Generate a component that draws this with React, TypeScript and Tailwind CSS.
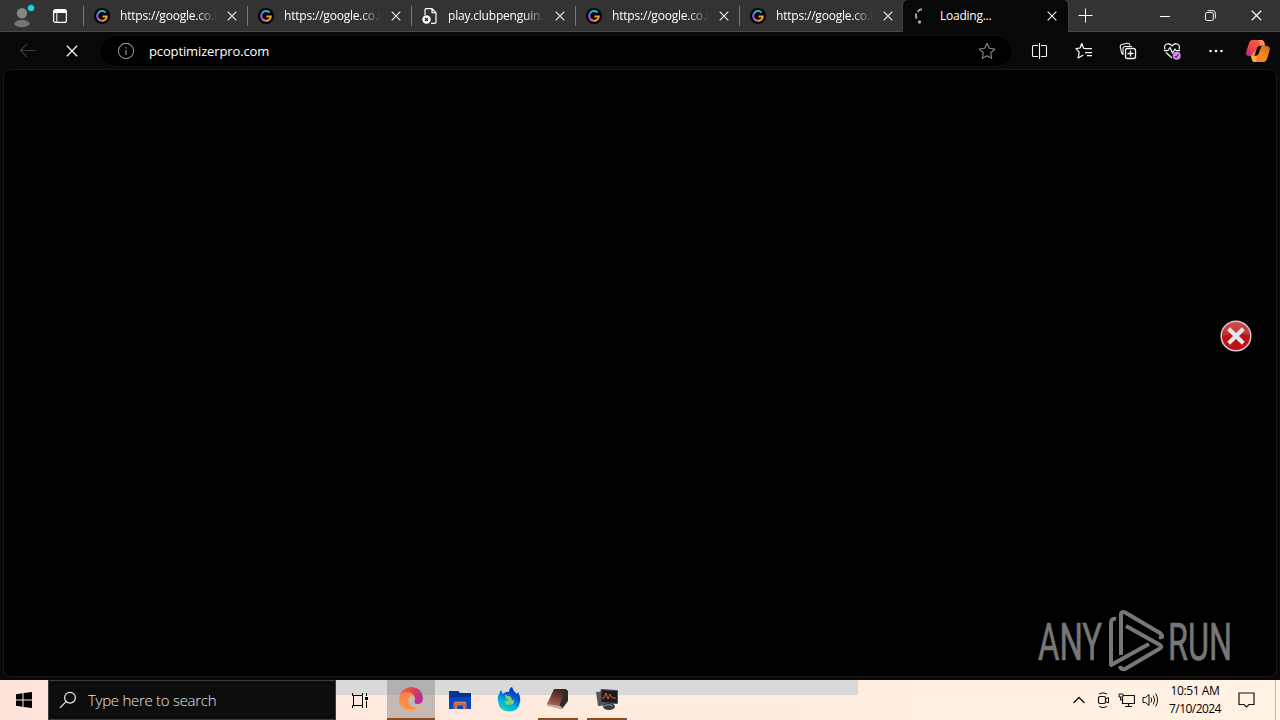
import type { ReactNode } from "react";

const GoogleIcon = () => (
  <svg width="16" height="16" viewBox="0 0 16 16" fill="none" strokeWidth="2">
    <circle cx="8" cy="8" r="8" fill="#050208" />
    <path d="M4 10.6A4.8 4.8 0 0 1 4 5.4" stroke="#7d63ee" />
    <path d="M4 5.4A4.8 4.8 0 0 1 11.6 4.6" stroke="#22b8e6" />
    <path d="M4 10.6A4.8 4.8 0 0 0 8 12.8" stroke="#e265b4" />
    <path d="M8 12.8A4.7 4.7 0 0 0 12.8 8.4H8.4" stroke="#f4a02b" />
  </svg>
);

const BrokenPageIcon = () => (
  <svg width="16" height="16" viewBox="0 0 16 16" fill="none" stroke="#fff" strokeWidth="1.2">
    <path d="M3 7V2Q3 .7 4.3 .7H10L14 4.7V14Q14 15.3 12.7 15.3H9M10 .7V4.7H14" />
    <circle cx="4.5" cy="11.5" r="4.2" fill="#fff" stroke="none" />
    <path d="M3 10L6 13M6 10L3 13" stroke="#222" />
  </svg>
);

const Spinner = () => (
  <svg width="16" height="16" viewBox="0 0 16 16" fill="none" stroke="#a8a8a8" strokeWidth="2">
    <path d="M8 1.3Q5.3 1.3 3.6 3.8" />
    <path d="M2.2 5.5Q1.3 8 2.6 10.6" />
    <circle cx="5.5" cy="14" r=".9" fill="#aaa" strokeWidth="1.5" />
  </svg>
);

const CloseIcon = ({ size = 10 }: { size?: number }) => (
  <svg width={size} height={size} viewBox="0 0 10 10" stroke="#f4f4f4" strokeWidth="1.1">
    <path d="M.7 .7L9.3 9.3M9.3 .7L.7 9.3" />
  </svg>
);

const tabs = [
  { title: "https://google.co.i", icon: <GoogleIcon /> },
  { title: "https://google.co.i", icon: <GoogleIcon /> },
  { title: "play.clubpenguin.c", icon: <BrokenPageIcon /> },
  { title: "https://google.co.i", icon: <GoogleIcon /> },
  { title: "https://google.co.i", icon: <GoogleIcon /> },
];

function TabStrip() {
  return (
    <div className="flex h-8 bg-[#333333]">
      <div className="flex w-[83px] items-center border-b border-b-[#484848] pl-3">
        <svg width="24" height="26" viewBox="0 0 24 26">
          <circle cx="10" cy="10.3" r="5.2" fill="#858585" />
          <path d="M2 21Q4 16.8 10 16.8T18 21Q15 24.2 10 24.2T2 21" fill="#737373" />
          <circle cx="19" cy="5" r="3.5" fill="#11dfe5" stroke="#333" strokeWidth=".6" />
        </svg>
        <svg className="ml-[17px]" width="14" height="14" viewBox="0 0 14 14" fill="none" stroke="#fff">
          <rect x=".6" y=".6" width="12.8" height="12.8" rx="2" strokeWidth="1.2" />
          <path d="M1 2.5H13" strokeWidth="3" />
          <path d="M3.8 4V13" />
        </svg>
      </div>
      {tabs.map((tab, i) => (
        <div key={i} className="flex w-[164px] items-center border-b border-b-[#484848]">
          <div className="h-5 w-px bg-[#747474]" />
          <div className="ml-[10px] w-4">{tab.icon}</div>
          <div className="ml-[10px] w-[102px] whitespace-nowrap text-[12px] tracking-[-0.2px] text-white [mask-image:linear-gradient(to_right,#000_76px,transparent_97px)]">{tab.title}</div>
          <div className="ml-[5px]"><CloseIcon /></div>
        </div>
      ))}
      <div className="flex w-[165px] items-center rounded-t-[5px] bg-[#080808] shadow-[0_0_1px_1px_#414141] [clip-path:inset(0_-2px_0_-2px)]">
        <div className="ml-[11px] w-4"><Spinner /></div>
        <div className="ml-[10px] w-[97px] text-[12px] tracking-[-0.25px] text-white">Loading...</div>
        <div className="ml-[10px]"><CloseIcon /></div>
      </div>
      <div className="flex flex-1 items-center border-b border-b-[#484848] pl-[10px]">
        <svg width="15" height="15" viewBox="0 0 15 15" stroke="#fff"><path d="M7.5 .5V14.5M.5 7.5H14.5" /></svg>
        <svg className="ml-[67px]" width="10" height="10" viewBox="0 0 10 10" stroke="#fff"><path d="M0 5.5H10" /></svg>
        <svg className="ml-[35px]" width="11" height="11" viewBox="0 0 11 11" fill="none" stroke="#eee">
          <rect x=".5" y="2.5" width="7.8" height="8" rx="1.5" />
          <path d="M2.5 .7H8Q10.3 .7 10.3 3V8.5" />
        </svg>
        <div className="ml-[35px]"><CloseIcon size={11} /></div>
      </div>
    </div>
  );
}

const StrokeIcon = ({ children, color = "#f5f5f5", className = "" }: { children: ReactNode; color?: string; className?: string }) => (
  <svg className={className} width="18" height="18" viewBox="0 0 18 18" fill="none" stroke={color} strokeWidth="1.1" strokeLinejoin="round">
    {children}
  </svg>
);

function Toolbar() {
  return (
    <div className="flex h-[37px] items-center bg-[#080808]">
      <StrokeIcon className="ml-[19px]" color="#3b3b3b"><path d="M17 8.5H1.5M8 2L1.5 8.5L8 15" /></StrokeIcon>
      <div className="ml-[29px]"><CloseIcon size={12} /></div>
      <div className="ml-[21px] flex h-8 w-[914px] items-center rounded-full border border-[#111111] bg-black pl-[17px] pr-4">
        <StrokeIcon color="#8b8b8b">
          <circle cx="9" cy="9" r="7.6" />
          <path d="M9 8V13" strokeWidth="1.3" />
          <path d="M9 5V6.5" strokeWidth="1.3" />
        </StrokeIcon>
        <div className="ml-[14px] flex-1 pt-0.5 text-[13px] tracking-[-0.13px] text-white">pcoptimizerpro.com</div>
        <StrokeIcon color="#898989"><path d="M9 1.3L11.3 6.3L16.7 7L12.7 10.8L13.7 16.3L9 13.7L4.3 16.3L5.3 10.8L1.3 7L6.7 6.3Z" /></StrokeIcon>
      </div>
      <div className="ml-[18px] flex items-center gap-[26px]">
        <StrokeIcon><path d="M7 3.5H2.5Q1.5 3.5 1.5 4.5V13.5Q1.5 14.5 2.5 14.5H7M10 3.5H14.5Q15.5 3.5 15.5 4.5V13.5Q15.5 14.5 14.5 14.5H10M8.5 1V17" /></StrokeIcon>
        <StrokeIcon><path d="M10.5 6.5L8.6 6.3L6.8 1.5L5 6L1 6.7L4.2 10.2L3.2 16L8.3 13M10 6.5H17M10 10.5H17M12 13.5H17" strokeWidth="1.25" /></StrokeIcon>
        <StrokeIcon>
          <path d="M4 12.5Q2.7 12 2.5 10.5L1.2 4.6Q1 3 2.7 2.5L8.5 1.2Q10.2 1 10.7 2.7L11 3.5M4 13V6.5Q4 4.5 6 4.5H13" />
          <rect x="6.5" y="6.5" width="10" height="10" rx="2" strokeWidth="1.3" />
          <path d="M11.5 8.5V14.5M8.5 11.5H14.5" strokeWidth="1.3" />
        </StrokeIcon>
        <StrokeIcon>
          <path d="M2 7.5Q.5 3 4 2Q7 1 9 4Q11 1 14 2Q17.5 3 16 7.5M1 8.5H5L7 5.5L9.5 11L12 7L13 8.5H17M3 10.5L9 16" strokeWidth="1.25" />
          <circle cx="13.7" cy="13.7" r="4" fill="#d18ee7" stroke="none" />
          <path d="M11.8 14.3L13.2 15.3L15.5 12.3" stroke="#4e2558" />
        </StrokeIcon>
        <svg width="18" height="18" viewBox="0 0 18 18" fill="#fff"><circle cx="3.5" cy="9" r="1.25" /><circle cx="9" cy="9" r="1.25" /><circle cx="14.5" cy="9" r="1.25" /></svg>
      </div>
      <svg className="ml-[20px]" width="26" height="24" viewBox="0 0 26 24">
        <defs>
          <linearGradient id="copilot-left" x1="0" y1="1" x2=".8" y2="0"><stop stopColor="#b72483" /><stop offset=".4" stopColor="#e8434c" /><stop offset="1" stopColor="#ff642e" /></linearGradient>
          <linearGradient id="copilot-right" x1=".8" y1="0" x2=".3" y2="1"><stop stopColor="#d66b1e" /><stop offset=".5" stopColor="#f28a20" /><stop offset="1" stopColor="#ff7a21" /></linearGradient>
        </defs>
        <path d="M7 1H16.5Q19 1 19.5 4.5L21 8L12 17H4Q0 17 1.2 13L4 4Q5 1 7 1" fill="url(#copilot-left)" />
        <path d="M14 1H16.5Q19 1 19.7 6H15Z" fill="#ff936d" />
        <path d="M19 23H10Q7 23 6.5 18L6 16L15 7H21Q26 7 24.5 12L22 20Q21 23 19 23" fill="url(#copilot-right)" />
        <path d="M6 17H10Q12 17 12.5 15L11 23H10Q7 23 6.5 19Z" fill="#ffac42" />
        <path d="M12 9Q13 6.5 16.5 7L13.5 15Q12.5 17 9.5 17Z" fill="#100507" />
      </svg>
    </div>
  );
}

function Watermark() {
  return (
    <svg className="absolute bottom-[3px] right-[40px]" width="198" height="64" viewBox="0 0 198 64" fill="none">
      <g fill="#777777" stroke="#777777" strokeWidth=".7" fontFamily="Roboto, sans-serif" fontSize="51.5">
        <text x="0" y="50.5" textLength="64" lengthAdjust="spacingAndGlyphs">ANY</text>
        <text x="130" y="50.5" textLength="64" lengthAdjust="spacingAndGlyphs">RUN</text>
      </g>
      <g stroke="#777777" strokeWidth="4" strokeLinejoin="round">
        <path d="M78 10Q73 9 73 14V56L111 35" />
        <path d="M83 46V6Q83 1 88 4L122 24Q127 29 121 28" />
        <path d="M88 17L122 36Q125 38 121 40L87 60Q83 61 82 57" />
      </g>
    </svg>
  );
}

function ErrorIcon() {
  return (
    <svg className="absolute right-[23px] top-[249px]" width="34" height="34" viewBox="0 0 34 34">
      <defs><linearGradient id="error-fill" x1="0" y1="0" x2="0" y2="1"><stop stopColor="#c9393d" /><stop offset=".5" stopColor="#b8141c" /><stop offset="1" stopColor="#c60c17" /></linearGradient></defs>
      <circle cx="17" cy="17" r="14.8" fill="url(#error-fill)" stroke="#d5cbcb" strokeWidth="1.5" />
      <path d="M3 17Q5 3 17 3T31 16Q17 13 3 17" fill="#fff" opacity=".12" />
      <path d="M9.7 9.7L24.3 24.3M24.3 9.7L9.7 24.3" stroke="#e5e8e8" strokeWidth="4.2" />
    </svg>
  );
}

const EdgeIcon = () => (
  <svg width="26" height="26" viewBox="0 0 26 26">
    <defs>
      <linearGradient id="edge-purple" x1="0" y1=".2" x2="1" y2=".7"><stop stopColor="#f2693c" /><stop offset=".5" stopColor="#dc3c50" /><stop offset="1" stopColor="#b32ca8" /></linearGradient>
      <linearGradient id="edge-orange" x1=".2" y1="0" x2=".8" y2="1"><stop stopColor="#ff7a48" /><stop offset="1" stopColor="#ffab4c" /></linearGradient>
    </defs>
    <path d="M2 9Q5 1 13.5 1Q24 1.5 25 12Q25 18 19.5 18Q16 18 16.5 15.5Q18 12 15.5 9.5Q10 4 2 9" fill="url(#edge-purple)" />
    <path d="M1 13Q2 6 9 6Q14 6 16.5 10Q11 9 10 14Q9 21 16 22Q20 22.5 23.5 19.5Q19 26 11.5 25Q1 23 1 13" fill="url(#edge-orange)" />
    <path d="M9 10Q4 16 8 21Q13 25 19 22Q12 22 10.5 17Q9.5 13 12 10Z" fill="#f78b45" />
  </svg>
);

const ExplorerIcon = () => (
  <svg width="22" height="20" viewBox="0 0 22 20">
    <path d="M0 1H9L11 3H22V19H0Z" fill="#0745c8" />
    <path d="M0 1H9L11 3H22V7H0Z" fill="#063391" />
    <path d="M4.5 19V13Q4.5 11.5 6 11.5H16Q17.5 11.5 17.5 13V19H14V15.5H8.5V19Z" fill="#c66a4c" />
    <path d="M6 12.5H17" stroke="#e08554" />
  </svg>
);

const FirefoxIcon = () => (
  <svg width="24" height="26" viewBox="0 0 24 26">
    <defs><linearGradient id="firefox-fill" x1=".8" y1="0" x2=".3" y2="1"><stop stopColor="#002cad" /><stop offset=".35" stopColor="#0752d7" /><stop offset=".65" stopColor="#00aadd" /><stop offset="1" stopColor="#10deb7" /></linearGradient></defs>
    <path d="M2 7L4 3L6 7Q9 4 12 5Q12 1 15 0Q16 4 20 7L21 5Q24 10 23 15Q22 24.5 12 24.5T1 14Q0 10 2 7" fill="url(#firefox-fill)" />
    <path d="M8 8Q13 7 16 11Q19 17 13 18Q7 18 8 14L12 13L9 12Z" fill="#76d070" />
    <path d="M10 8Q15 7 16 13" fill="none" stroke="#1c54bf" strokeWidth="1.8" />
  </svg>
);

const BookIcon = () => (
  <svg width="24" height="24" viewBox="0 0 24 24">
    <defs><linearGradient id="book-cover" x1=".6" y1="0" x2=".3" y2="1"><stop stopColor="#3b2423" /><stop offset=".45" stopColor="#733e33" /><stop offset="1" stopColor="#b3705c" /></linearGradient></defs>
    <path d="M9 2H20L22 4V14L16 22L1 18Z" fill="#34292a" />
    <path d="M8 2L19 3L13 20L1 17Z" fill="url(#book-cover)" />
    <path d="M1 17L14 19L16 20V22L1 19Z" fill="#c3aca5" />
  </svg>
);

const MonitorIcon = () => (
  <svg width="24" height="24" viewBox="0 0 24 24">
    <path d="M1 5L14 4L15 18L3 19Z" fill="#54575b" />
    <path d="M6 2.5L22.5 3.5V16.5L6 15.5Z" fill="#1b1b1f" stroke="#555" />
    <path d="M7 11H9L11 6L13 12L15 7L17 11H21" fill="none" stroke="#d65b30" />
    <ellipse cx="14" cy="19.5" rx="6" ry="3.5" fill="#393a3f" />
    <path d="M9 19Q14 16 18 19" stroke="#999" fill="none" />
  </svg>
);

function Taskbar() {
  return (
    <div className="flex h-10 bg-linear-to-r from-[#ffe4dc] via-[#ffebdf] to-[#fff3e3] text-black">
      <div className="flex w-12 items-center justify-center">
        <svg width="16" height="16" viewBox="0 0 16 16"><path d="M0 2.3L6.5 1.3V7.5H0ZM7.5 1.1L16 0V7.5H7.5ZM0 8.5H6.5V14.7L0 13.7ZM7.5 8.5H16V16L7.5 14.9Z" /></svg>
      </div>
      <div className="flex w-72 items-center border border-[#3b3b3b] bg-[#0d0d0d] pl-[10px]">
        <svg width="18" height="18" viewBox="0 0 18 18" fill="none" stroke="#eee" strokeWidth="1.2"><circle cx="11" cy="6.7" r="5.4" /><path d="M7 10.6L1 16.8" /></svg>
        <div className="ml-[11px] text-[15px] font-light tracking-[-0.28px] text-[#e6e6e6]">Type here to search</div>
      </div>
      <div className="flex h-10 w-[522px] bg-[linear-gradient(#d9d9d9,#d9d9d9)] bg-[length:100%_15px] bg-no-repeat">
        <div className="flex w-[51px] items-center pl-4">
          <svg width="17" height="17" viewBox="0 0 17 17" fill="none" stroke="#000">
            <path d="M.5 1V3.5H10.5V1M.5 16V13.5H10.5V16M14.5 1V4M14.5 9V16" />
            <path d="M1.5 4V13M10.5 4V13" />
            <path d="M13 6.5H16" strokeWidth="3" />
          </svg>
        </div>
        <div className="flex w-12 items-center justify-center border-b-2 border-[#8b4d20] bg-[#888888]/50"><EdgeIcon /></div>
        <div className="flex w-[50px] items-center justify-center"><ExplorerIcon /></div>
        <div className="flex w-12 items-center justify-center"><FirefoxIcon /></div>
        <div className="ml-[5px] flex w-10 items-center justify-center border-b-2 border-[#8b4d20]"><BookIcon /></div>
        <div className="ml-[9px] flex w-10 items-center justify-center border-b-2 border-[#8b4d20]"><MonitorIcon /></div>
      </div>
      <div className="ml-auto flex items-center">
        <svg width="12" height="8" viewBox="0 0 12 8" fill="none" stroke="#111" strokeWidth="1.3"><path d="M.5 7L6 1.5L11.5 7" /></svg>
        <svg className="ml-3" width="13" height="18" viewBox="0 0 13 18" fill="none" stroke="#111">
          <rect x="1.5" y="5.5" width="7" height="7" rx="1.5" strokeWidth="1.2" />
          <path d="M8.5 8L11.5 6.5V12L8.5 10.5M2 3Q6 .5 10 3M2 15.5Q6 18 10 15.5" />
        </svg>
        <svg className="ml-[8px]" width="17" height="16" viewBox="0 0 17 16" fill="none" stroke="#111">
          <path d="M5 3.5H16.5V11.5H4.5V5.5M10.5 11.5V14.5M7 14.5H14" strokeWidth="1.2" />
          <path d="M1 2H5V5H1ZM2.5 5V8H5" />
        </svg>
        <svg className="ml-[7px]" width="18" height="16" viewBox="0 0 18 16" fill="none" stroke="#111">
          <path d="M1 5.5H3.5L7 2.5V13.5L3.5 10.5H1ZM9 5.5Q10.5 8 9 10.5M11.3 3.5Q14 8 11.3 12.5M13.6 1.5Q17.5 8 13.6 14.5" />
        </svg>
        <div className="ml-[8px] w-[54px] whitespace-nowrap text-center text-[12px] leading-[18px]">
          <div className="tracking-[-0.4px]">10:51 AM</div>
          <div className="-mx-1 tracking-[-0.55px]">7/10/2024</div>
        </div>
        <svg className="ml-[16px]" width="17" height="16" viewBox="0 0 17 16" fill="none" stroke="#111" strokeWidth="1.2"><path d="M1 1H16V12.5H11L8.5 15L6 12.5H1Z" /></svg>
        <div className="ml-5 h-10 w-[5px] border-l border-[#c5b8a9]" />
      </div>
    </div>
  );
}

export default function App() {
  return (
    <div className="h-[720px] w-[1280px] overflow-hidden bg-[#080808] font-['Open_Sans','Noto_Sans',sans-serif]">
      <TabStrip />
      <Toolbar />
      <div className="relative mx-[3px] mb-[3px] h-[608px] rounded-[8px] border border-[#191919] bg-black">
        <ErrorIcon />
        <Watermark />
      </div>
      <Taskbar />
    </div>
  );
}
